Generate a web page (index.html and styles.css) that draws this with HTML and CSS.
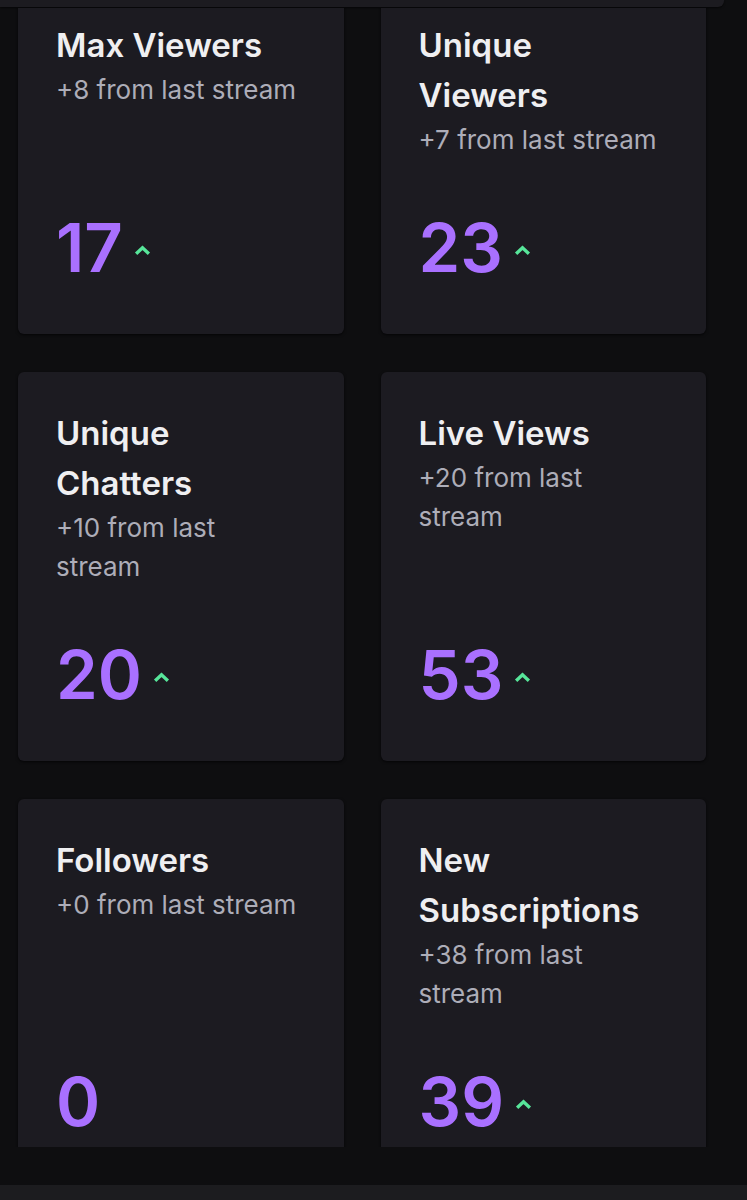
FILE: index.html
```html
<!DOCTYPE html>
<html>
<head>
    <title>Stream Stats</title>
    <link rel="stylesheet" href="styles.css">
</head>
<body>
    <div class="top-panel"></div>

    <div class="stats-scroll">
        <div class="stats-grid">
            <div class="stat-card">
                <h3 class="stat-title">Max Viewers</h3>
                <p class="stat-change">+8 from last stream</p>
                <div class="stat-value">17 <svg class="trend" viewBox="0 0 16 10"><path d="M2 8 L8 2.5 L14 8"/></svg></div>
            </div>
            <div class="stat-card">
                <h3 class="stat-title">Unique Viewers</h3>
                <p class="stat-change">+7 from last stream</p>
                <div class="stat-value">23 <svg class="trend" viewBox="0 0 16 10"><path d="M2 8 L8 2.5 L14 8"/></svg></div>
            </div>
            <div class="stat-card">
                <h3 class="stat-title">Unique Chatters</h3>
                <p class="stat-change">+10 from last stream</p>
                <div class="stat-value">20 <svg class="trend" viewBox="0 0 16 10"><path d="M2 8 L8 2.5 L14 8"/></svg></div>
            </div>
            <div class="stat-card">
                <h3 class="stat-title">Live Views</h3>
                <p class="stat-change">+20 from last stream</p>
                <div class="stat-value">53 <svg class="trend" viewBox="0 0 16 10"><path d="M2 8 L8 2.5 L14 8"/></svg></div>
            </div>
            <div class="stat-card">
                <h3 class="stat-title">Followers</h3>
                <p class="stat-change">+0 from last stream</p>
                <div class="stat-value">0</div>
            </div>
            <div class="stat-card">
                <h3 class="stat-title">New Subscriptions</h3>
                <p class="stat-change">+38 from last stream</p>
                <div class="stat-value">39 <svg class="trend" viewBox="0 0 16 10"><path d="M2 8 L8 2.5 L14 8"/></svg></div>
            </div>
        </div>
    </div>

    <div class="bottom-bar"></div>
</body>
</html>
```

FILE: styles.css
```css
/* Stream stats dashboard */

body {
    font-family: Inter, "Noto Sans", sans-serif;
    background-color: #0e0e10;
    margin: 0;
    padding: 0;
    height: 1200px;
    overflow: hidden;
    display: flex;
    flex-direction: column;
}

.top-panel {
    width: 724px;
    height: 7px;
    background-color: #1c1b20;
    border-bottom-right-radius: 6px;
    box-shadow: 0 1px 2px rgba(0, 0, 0, 0.6);
    flex-shrink: 0;
}

.stats-scroll {
    height: 1139px;
    margin-top: 1px;
    overflow: hidden;
    padding: 0 41px 0 18px;
    flex-shrink: 0;
}

.stats-grid {
    display: grid;
    grid-template-columns: 1fr 1fr;
    gap: 38px 37px;
    margin-top: -24px;
}

.stat-card {
    background-color: #1c1b21;
    border-radius: 6px;
    box-shadow: 0 1px 3px rgba(0, 0, 0, 0.7);
    padding: 36px 45px 46px 38px;
    display: flex;
    flex-direction: column;
}

.stat-title {
    margin: 0;
    font-size: 33px;
    font-weight: 600;
    line-height: 50px;
    color: #efeff1;
}

.stat-change {
    margin: 0;
    font-size: 26px;
    line-height: 39px;
    color: #adadb8;
}

.stat-value {
    margin-top: auto;
    padding-top: 49px;
    font-size: 67px;
    font-weight: 600;
    line-height: 80px;
    color: #a970ff;
    display: flex;
    align-items: center;
}

.trend {
    width: 17px;
    height: 11px;
    margin-left: 11px;
    margin-top: 5px;
    fill: none;
    stroke: #57e69a;
    stroke-width: 3.2;
}

.bottom-bar {
    margin-top: auto;
    height: 15px;
    background-color: #1c1c1f;
}
```
